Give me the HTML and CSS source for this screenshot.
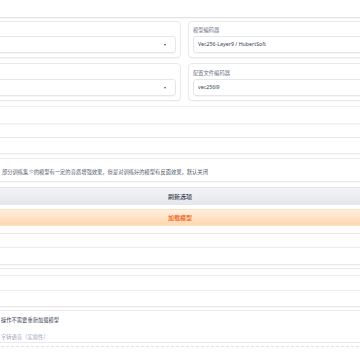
FILE: index.html
```html
<!DOCTYPE html>
<html lang="zh-CN">
<head>
  <meta charset="UTF-8" />
  <meta name="viewport" content="width=device-width, initial-scale=1.0"/>
  <title>Sovits4.0 推理</title>
  <link rel="stylesheet" href="styles.css">
</head>
<body>
  <div class="page">
    <div class="block top-block"></div>

    <div class="row">
      <div class="box col-left">
        <span class="label"></span>
        <div class="dropdown"><span class="arrow"></span></div>
      </div>
      <div class="box col-right">
        <span class="label"><span class="tiny">模型编码器</span></span>
        <div class="textbox"><span class="tiny">Vec256-Layer9 / HubertSoft</span></div>
      </div>
    </div>

    <div class="row row-second">
      <div class="box col-left">
        <span class="label"></span>
        <div class="dropdown"><span class="arrow"></span></div>
      </div>
      <div class="box col-right">
        <span class="label"><span class="tiny">配置文件编码器</span></span>
        <div class="textbox"><span class="tiny">vec256l9</span></div>
      </div>
    </div>

    <div class="block block-c"></div>
    <div class="block block-d"></div>

    <div class="block check-row">
      <span class="info tiny">部分训练集少的模型有一定的音质增强效果，但是对训练好的模型有反面效果，默认关闭</span>
    </div>

    <button class="btn btn-secondary">刷新选项</button>
    <button class="btn btn-primary">加载模型</button>

    <div class="block group-f">
      <div class="sub sub-f1"></div>
    </div>

    <div class="block group-g">
      <div class="sub sub-g1"></div>
      <div class="sub sub-g2"></div>
    </div>

    <div class="block group-h">
      <div class="info info-dark tiny">操作不需要重新加载模型</div>
      <div class="tabs">
        <span class="tab tiny">字转语音（实验性）</span>
      </div>
      <div class="dotted"></div>
    </div>
  </div>
</body>
</html>
```

FILE: styles.css
```css
* {
  box-sizing: border-box;
}
html, body {
  margin: 0;
  padding: 0;
  background: #fff;
  overflow: hidden;
}
body {
  font-family: "Noto Sans", "Noto Sans CJK SC", sans-serif;
  color: #374151;
  width: 360px;
  height: 360px;
}
.page {
  width: 560px;
  margin-left: -100px;
}
/* text below 6px is clamped by the browser, so shrink it instead */
.tiny {
  display: block;
  font-size: 6px;
  line-height: 9px;
  white-space: nowrap;
  transform: scale(0.88);
  transform-origin: left center;
}
.block, .box {
  border: 1px solid #e9e9ec;
  border-radius: 4px;
  background: #fff;
  box-shadow: 0 1px 1px rgba(0, 0, 0, 0.03);
}
.top-block {
  margin-top: -10px;
  height: 28px;
  border-color: #e2e2e5;
}
.row {
  display: flex;
  gap: 7px;
  margin-top: 3px;
  height: 37px;
}
.row-second {
  margin-top: 5px;
  height: 38px;
}
.box {
  display: flex;
  flex-direction: column;
  padding: 4px 4px 3px;
}
.row-second .box {
  padding-top: 5px;
}
.col-left {
  width: 281px;
}
.col-right {
  flex: 1;
}
.label {
  height: 9px;
  margin-bottom: 1px;
  color: #6b7280;
}
.dropdown, .textbox {
  height: 17px;
  border: 1px solid #e6e6ea;
  border-radius: 3px;
  box-shadow: 0 1px 1px rgba(0, 0, 0, 0.04);
  display: flex;
  align-items: center;
  color: #374151;
}
.dropdown {
  justify-content: flex-end;
  padding-right: 9px;
}
.textbox {
  padding-left: 4px;
}
.arrow {
  width: 0;
  height: 0;
  border-left: 1.5px solid transparent;
  border-right: 1.5px solid transparent;
  border-top: 2px solid #4b5563;
}
.block-c {
  margin-top: 5px;
  height: 18px;
  border-color: #f0f0f2;
}
.block-d {
  margin-top: 13px;
  height: 17px;
}
.check-row {
  margin-top: 4px;
  height: 24px;
  padding: 9px 0 0 101px;
}
.info {
  line-height: 8px;
  color: #4b5563;
}
.btn {
  display: block;
  width: 100%;
  border: 1px solid #e5e7eb;
  border-radius: 4px;
  font-family: "Noto Sans CJK SC", sans-serif;
  font-size: 6px;
  font-weight: 500;
  padding: 0;
}
.btn-secondary {
  margin-top: 5px;
  height: 18px;
  background: linear-gradient(to bottom, #f3f4f6, #e6e7eb);
  color: #374151;
}
.btn-primary {
  margin-top: 4px;
  height: 17px;
  border-color: #fde3c6;
  background: linear-gradient(to bottom, #ffeedd, #fed8ae);
  color: #ea580c;
}
.group-f {
  margin-top: 7px;
  height: 32px;
}
.sub {
  border-bottom: 1px solid #ececef;
}
.sub-f1 {
  height: 14px;
}
.group-g {
  margin-top: 3px;
  height: 39px;
}
.sub-g1 {
  height: 7px;
}
.sub-g2 {
  height: 15px;
}
.group-h {
  margin-top: 3px;
  height: 60px;
  padding: 5px 0 0 100px;
}
.info-dark {
  line-height: 9px;
  color: #374151;
}
.tabs {
  margin: 8px 0 0 -100px;
  padding-left: 100px;
  height: 10px;
  border-bottom: 1px solid #e9e9ec;
}
.tab {
  color: #9ca3af;
}
.dotted {
  margin: 3px 0 0 -100px;
  border-top: 1px dashed #e3e3e6;
}
```
